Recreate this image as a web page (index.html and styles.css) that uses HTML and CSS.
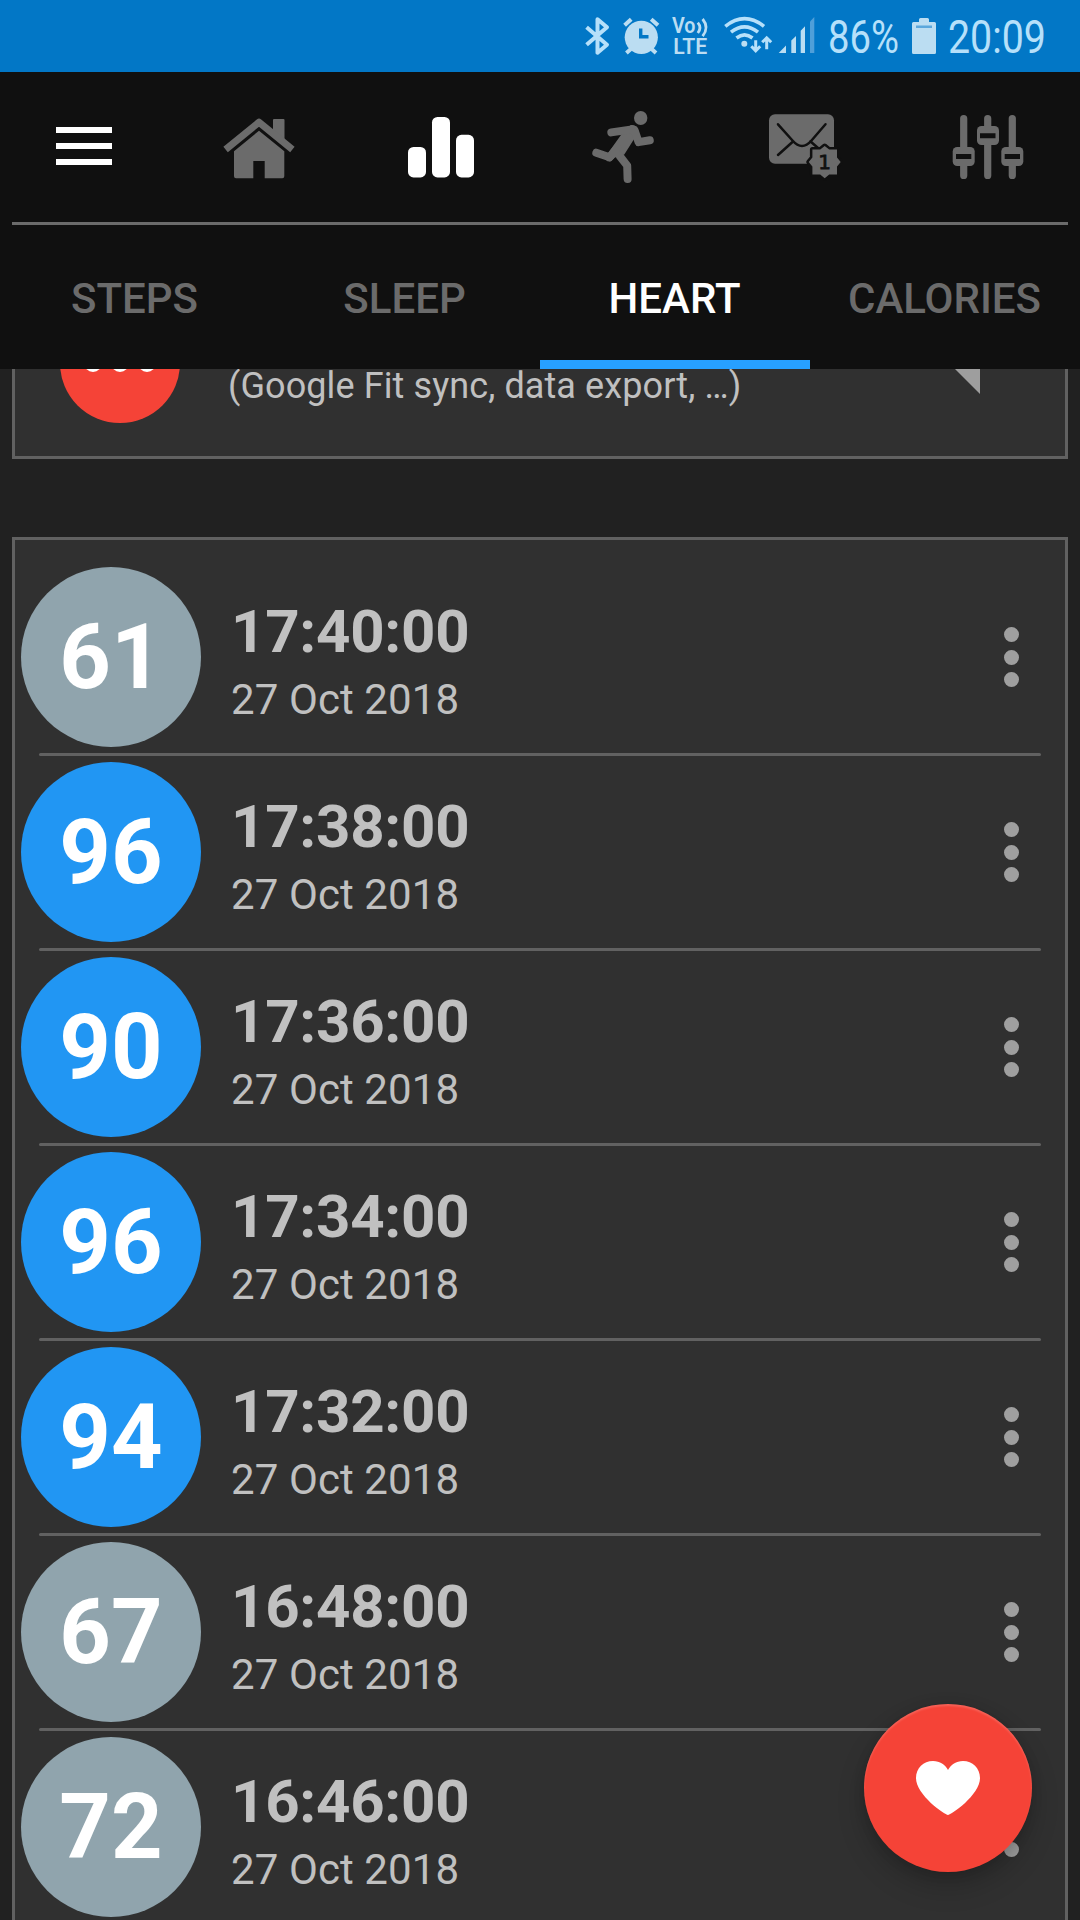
FILE: index.html
```
<!DOCTYPE html>
<html lang="en">
<head>
  <meta charset="UTF-8" />
  <title>Heart</title>
  <link rel="stylesheet" href="styles.css">
</head>
<body>
  <div class="app">
    <div class="status_bar">
      <svg class="bluetooth" width="24" height="38" viewBox="0 0 24 38">
        <path d="M1.6 10.2L22 27.7L12.5 35.7V2.2L22 10.3L1.6 27.8" />
      </svg>
      <svg class="alarm" width="37" height="38" viewBox="0 0 37 38">
        <circle cx="18.3" cy="20.3" r="16.6" />
        <path class="ears" d="M1.6 8.3L8.2 2.3M28.2 2.3L35 8.3M3.4 36L9 31M33 36L27.6 31" />
        <path class="hands" d="M17.7 11.5V19.7H25.5" />
      </svg>
      <svg class="volte" width="37" height="38" viewBox="0 0 37 38">
        <text x="0" y="16.3" textLength="23.5" lengthAdjust="spacingAndGlyphs">Vo</text>
        <text x="1.3" y="36.5" textLength="34" lengthAdjust="spacingAndGlyphs">LTE</text>
        <path d="M25.8 5.6Q30 10.5 25.8 16M30.6 2Q37.5 10.5 30.6 19.2" />
      </svg>
      <svg class="wifi" width="49" height="38" viewBox="0 0 49 38">
        <path d="M1.3 9.3Q20.5 -6 40 9.3M7 15.2Q20.5 4.5 34 15.2M12.5 21Q20.5 14.6 28.5 21" />
        <circle cx="20.3" cy="26.7" r="3" />
        <path class="arrows" d="M31.7 23.3V33.5M27.3 29.2L31.7 33.8L36.2 29.2M42.7 32.3V21M38.2 25.3L42.7 20.8L47.2 25.3" />
      </svg>
      <svg class="signal" width="37" height="38" viewBox="0 0 37 38">
        <path d="M.7 36H8V28.5ZM13.3 36V23.5L18 19V36ZM22.7 36V13.8L27 9.3V36Z" />
        <path class="weak" d="M32 36V4.4L36.3 0V36Z" />
      </svg>
      <svg class="percent" width="72" height="38" viewBox="0 0 72 38">
        <text x="0" y="36.2" textLength="71" lengthAdjust="spacingAndGlyphs">86%</text>
      </svg>
      <svg class="battery" width="24" height="38" viewBox="0 0 24 38">
        <path d="M7 5V2.5Q7 1 8.500 1H15.500Q17 1 17 2.500V5H22.500Q24 5 24 6.500V35.500Q24 37 22.500 37H1.500Q0 37 0 35.500V6.500Q0 5 1.500 5Z" />
        <rect x="4" y="8.500" width="16" height="2.500" />
      </svg>
      <svg class="clock" width="100" height="38" viewBox="0 0 100 38">
        <text x="0" y="36.2" textLength="98" lengthAdjust="spacingAndGlyphs">20:09</text>
      </svg>
    </div>

    <div class="header">
      <div class="nav">
        <svg class="menu" width="56" height="72" viewBox="0 0 56 72">
          <path d="M0 17H56V23H0ZM0 33H56V39H0ZM0 49H56V55H0Z" />
        </svg>
        <!-- Home -->
        <svg width="72" height="72" viewBox="0 0 72 72">
          <path d="M50 22V10Q50 9 51 9H60.500Q61.500 9 61.500 10V31Z" />
          <path class="roof" d="M2.600 39.500L36 12.200L69.400 39.500" />
          <path d="M36 20.700L61.300 41.300V66.300Q61.300 68.300 59.300 68.300H41.700V51H30.300V68.300H13Q11 68.300 11 66.300V41.300Z" />
        </svg>
        <!-- Charts -->
        <svg class="active" width="72" height="72" viewBox="0 0 72 72">
          <rect x="3" y="37" width="18" height="30.400" rx="5.500" />
          <rect x="27" y="7" width="18" height="60.400" rx="5.500" />
          <rect x="51" y="24.800" width="18" height="42.600" rx="5.500" />
        </svg>
        <!-- Workouts -->
        <svg width="72" height="72" viewBox="0 0 72 72">
          <ellipse cx="53.700" cy="8" rx="6.700" ry="7" />
          <path d="M43.700 15Q50 14 51.500 21L52 25L46.800 29.500L37.300 44.500L28 47.500L24 51.300Q22 51.800 19.500 51L21 43.300L34.300 24.500Z" />
          <path class="limb" d="M24.300 22.400L45 19.400M47.500 20L51.600 32.100L62.800 30.300M9.300 42.700L22.600 47.300L30 38M32.700 46L40.200 55.600L40.600 69" />
        </svg>
        <!-- Messages -->
        <svg width="72" height="72" viewBox="0 0 72 72">
          <rect x="0" y="4.300" width="65" height="49.400" rx="6" />
          <path class="fold" d="M9 14.300L23.500 30.500Q33 41.500 42.500 30.500L56.500 14.300M24.300 31.300L9 45M41.300 31.300L49 38" />
          <path class="badge" d="M55.700 36L60.200 39.600H68V47.500L71.700 52L68 56.500V64.400H60.200L55.700 68.300L51.200 64.400H43.400V56.500L39.700 52L43.400 47.500V39.600H51.200Z" />
          <text class="count" x="55.700" y="59" text-anchor="middle">1</text>
        </svg>
        <!-- Settings -->
        <svg width="72" height="72" viewBox="0 0 72 72">
          <path class="track" d="M12.700 8.600V65.400M36.700 8.600V65.400M61.300 8.600V65.400" />
          <rect x="1.700" y="37" width="22" height="19" rx="4.500" />
          <rect x="26" y="16" width="22" height="19" rx="4.500" />
          <rect x="50.300" y="37" width="22" height="19" rx="4.500" />
          <path class="slot" d="M5 44H20.300V49H5ZM29 23.200H44.500V28.200H29ZM53.700 44H69V49H53.700Z" />
        </svg>
      </div>
      <div class="tabs">
        <div class="tab">STEPS</div>
        <div class="tab">SLEEP</div>
        <div class="tab selected">HEART</div>
        <div class="tab">CALORIES</div>
      </div>
    </div>

    <div class="content">
      <div class="card more_card">
        <svg class="more" width="120" height="120" viewBox="0 0 120 120">
          <circle cx="60" cy="60" r="60" />
          <path d="M33 60h.01M60 60h.01M87 60h.01" />
        </svg>
        <p>(Google Fit sync, data export, …)</p>
        <svg class="corner" width="50" height="50" viewBox="0 0 50 50">
          <path d="M0 0H50V50Z" />
        </svg>
      </div>

      <div class="card list" id="list"></div>
    </div>

    <div class="fab">
      <svg width="64" height="54" viewBox="0 0 64 54">
        <path d="M32 54C29 54 0 34 0 17C0 7 7.500 0 17 0C24 0 29 3.500 32 9C35 3.500 40 0 47 0C56.500 0 64 7 64 17C64 34 35 54 32 54Z" />
      </svg>
    </div>
  </div>

  <script>
    const readings = [
      { bpm: 61, time: "17:40:00" },
      { bpm: 96, time: "17:38:00" },
      { bpm: 90, time: "17:36:00" },
      { bpm: 96, time: "17:34:00" },
      { bpm: 94, time: "17:32:00" },
      { bpm: 67, time: "16:48:00" },
      { bpm: 72, time: "16:46:00" },
    ];

    document.getElementById("list").innerHTML = readings.map((r) => `
      <div class="row">
        <div class="bpm ${r.bpm >= 90 ? "high" : ""}">${r.bpm}</div>
        <div class="info">
          <div class="time">${r.time}</div>
          <div class="date">27 Oct 2018</div>
        </div>
        <div class="dots"><span></span><span></span><span></span></div>
      </div>`).join('<div class="divider"></div>');
  </script>
</body>
</html>
```

FILE: styles.css
```
* {
  margin: 0;
  padding: 0;
  box-sizing: border-box;
}

body {
  font-family: Roboto, "Liberation Sans", sans-serif;
  background-color: #212121;
  overflow: hidden;
}

svg {
  display: block;
  flex: none;
  overflow: visible;
}

.app {
  width: 1080px;
  height: 1920px;
  display: flex;
  flex-direction: column;
  overflow: hidden;
  position: relative;
}

/* Status bar */
.status_bar {
  height: 72px;
  flex: none;
  background-color: #0277c6;
  display: flex;
  padding: 17px 30px 0 585px;
  fill: #bbddf2;
}

.status_bar path {
  stroke-width: 3.6;
}

.bluetooth path {
  fill: none;
  stroke: #b6e0fa;
  stroke-width: 4;
  stroke-linejoin: round;
}

.alarm {
  margin-left: 14px;
}

.alarm .ears {
  stroke: #bbddf2;
  stroke-width: 4;
}

.alarm .hands {
  fill: none;
  stroke: #0277c6;
  stroke-width: 3.4;
}

.volte {
  margin-left: 12px;
}

.volte text {
  font-size: 21.5px;
  font-weight: 600;
}

.volte path {
  fill: none;
  stroke: #bbddf2;
  stroke-width: 2.8;
}

.wifi {
  margin-left: 15px;
}

.wifi path {
  fill: none;
  stroke: #b6e0fa;
}

.wifi .arrows {
  stroke-width: 3;
}

.signal {
  margin-left: 5px;
}

.signal .weak {
  fill: #4f9fd9;
}

.percent {
  margin-left: 13px;
}

.percent text,
.clock text {
  font-size: 46px;
  fill: #b6e0fa;
}

.battery {
  margin-left: 12px;
}

.battery rect {
  fill: #5ba7dc;
}

.clock {
  margin-left: 12px;
}

/* Header */
.header {
  flex: none;
  background-color: #101010;
}

.nav {
  height: 153px;
  margin: 0 12px;
  padding: 38px 45px 0 44px;
  display: flex;
  gap: 110px;
  border-bottom: 3px solid #6b6b6b;
  fill: #6b6b6b;
}

.nav .menu {
  fill: #fff;
  margin-right: 1px;
}

.nav .active {
  fill: #fff;
}

.roof {
  fill: none;
  stroke: #6b6b6b;
  stroke-width: 7;
  stroke-linejoin: round;
}

.limb {
  fill: none;
  stroke: #6b6b6b;
  stroke-width: 8;
  stroke-linecap: round;
  stroke-linejoin: round;
}

.fold {
  fill: none;
  stroke: #101010;
  stroke-width: 2.5;
  stroke-linecap: round;
}

.badge {
  stroke: #101010;
  stroke-width: 5;
  stroke-linejoin: round;
  paint-order: stroke;
}

.count {
  font-family: "DejaVu Sans", sans-serif;
  font-size: 20px;
  fill: #101010;
  stroke: #101010;
  stroke-width: 0.8;
}

.track {
  stroke: #6b6b6b;
  stroke-width: 7.2;
  stroke-linecap: round;
}

.slot {
  fill: #101010;
}

.tabs {
  display: grid;
  grid-template-columns: repeat(4, 1fr);
}

.tab {
  height: 144px;
  line-height: 148px;
  text-align: center;
  font-size: 42px;
  font-weight: 500;
  color: #6b6b6b;
  padding-right: 1px;
}

.tab.selected {
  color: #fff;
  border-bottom: 9px solid #27a0ff;
}

/* Content */
.content {
  flex: 1;
  min-height: 0;
  overflow: hidden;
  padding: 0 12px;
}

.card {
  background-color: #303030;
  border: 3px solid #616161;
}

/* scrolled half way under the header */
.more_card {
  height: 180px;
  margin-top: -90px;
  margin-bottom: 78px;
  padding: 21px 85px 0 45px;
  display: flex;
  color: #c0c0c0;
}

.more {
  fill: #f54337;
}

.more path {
  stroke: #fff;
  stroke-width: 18;
  stroke-linecap: round;
}

.more_card p {
  font-size: 36px;
  line-height: 42px;
  letter-spacing: 0.1px;
  margin: 62px 0 0 48px;
  white-space: nowrap;
}

.corner {
  margin: 41px 0 0 auto;
  fill: #9e9e9e;
}

.list {
  padding: 27px 24px 60px 6px;
}

.row {
  height: 180px;
  display: flex;
  align-items: center;
}

.bpm {
  width: 180px;
  height: 180px;
  border-radius: 50%;
  background-color: #90a4ad;
  color: #fff;
  font-size: 90px;
  font-weight: 700;
  line-height: 181px;
  text-align: center;
}

.bpm.high {
  background-color: #2196f3;
}

.info {
  margin-left: 30px;
  padding-top: 11px;
  color: #c0c0c0;
}

.time {
  font-size: 60px;
  font-weight: 700;
  line-height: 70px;
  letter-spacing: -0.25px;
  margin-bottom: 5px;
}

.date {
  font-size: 42px;
  line-height: 56px;
  letter-spacing: 0.1px;
}

.dots {
  margin: 0 22.5px 0 auto;
  display: flex;
  flex-direction: column;
  gap: 7.5px;
}

.dots span {
  width: 15px;
  height: 15px;
  border-radius: 50%;
  background-color: #9f9f9f;
}

.divider {
  height: 3px;
  margin: 6px 0 6px 18px;
  border-radius: 1.5px;
  background-color: #616161;
}

/* Floating button */
.fab {
  position: absolute;
  right: 48px;
  bottom: 48px;
  width: 168px;
  height: 168px;
  border-radius: 50%;
  background-color: #f54337;
  fill: #fff;
  display: flex;
  align-items: center;
  justify-content: center;
  box-shadow: 0 14px 28px rgba(0, 0, 0, 0.2), 0 2px 12px rgba(0, 0, 0, 0.12), inset 0 2px 2px rgba(255, 255, 255, 0.16);
}
```
